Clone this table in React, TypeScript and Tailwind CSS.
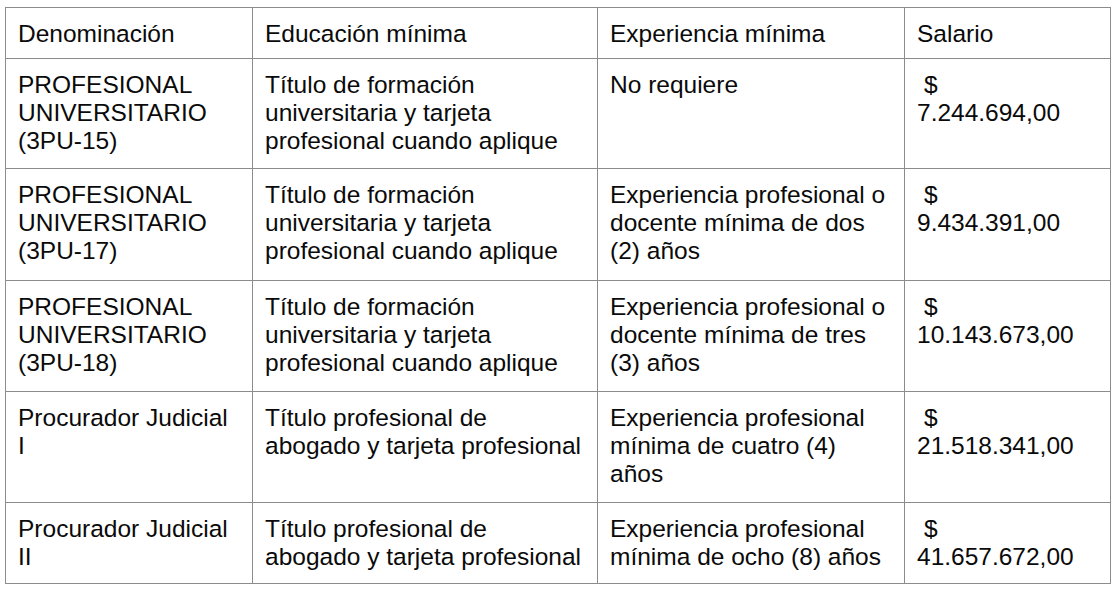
type Row = {
  h: string;
  name: string[];
  edu: string[];
  exp: string[];
  salary: string;
};

const eduUni = ["Título de formación", "universitaria y tarjeta", "profesional cuando aplique"];
const eduAbogado = ["Título profesional de", "abogado y tarjeta profesional"];

const rows: Row[] = [
  {
    h: "h-[110px]",
    name: ["PROFESIONAL", "UNIVERSITARIO", "(3PU-15)"],
    edu: eduUni,
    exp: ["No requiere"],
    salary: "7.244.694,00",
  },
  {
    h: "h-[112px]",
    name: ["PROFESIONAL", "UNIVERSITARIO", "(3PU-17)"],
    edu: eduUni,
    exp: ["Experiencia profesional o", "docente mínima de dos", "(2) años"],
    salary: "9.434.391,00",
  },
  {
    h: "h-[111px]",
    name: ["PROFESIONAL", "UNIVERSITARIO", "(3PU-18)"],
    edu: eduUni,
    exp: ["Experiencia profesional o", "docente mínima de tres", "(3) años"],
    salary: "10.143.673,00",
  },
  {
    h: "h-[111px]",
    name: ["Procurador Judicial", "I"],
    edu: eduAbogado,
    exp: ["Experiencia profesional", "mínima de cuatro (4)", "años"],
    salary: "21.518.341,00",
  },
  {
    h: "h-[81px]",
    name: ["Procurador Judicial", "II"],
    edu: eduAbogado,
    exp: ["Experiencia profesional", "mínima de ocho (8) años"],
    salary: "41.657.672,00",
  },
];

const cell =
  "border border-[#8c8c8c] px-[12px] pt-[12px] align-top text-left font-normal whitespace-nowrap overflow-hidden";

const Lines = ({ lines }: { lines: string[] }) => (
  <>
    {lines.map((line, i) => (
      <div key={i}>{line}</div>
    ))}
  </>
);

const App = () => {
  return (
    <div className="w-[1116px] h-[592px] bg-white pl-[5px] pt-[7px] font-['Liberation_Sans',Arial,sans-serif] text-[24.5px] leading-[28px] text-[#0a0a0a]">
      <table className="table-fixed border-collapse w-[1105px]">
        <colgroup>
          <col className="w-[247px]" />
          <col className="w-[345px]" />
          <col className="w-[307px]" />
          <col className="w-[206px]" />
        </colgroup>
        <thead>
          <tr className="h-[51px]">
            <th className={cell}>Denominación</th>
            <th className={cell}>Educación mínima</th>
            <th className={cell}>Experiencia mínima</th>
            <th className={cell}>Salario</th>
          </tr>
        </thead>
        <tbody>
          {rows.map((row, i) => (
            <tr key={i} className={row.h}>
              <td className={cell}>
                <Lines lines={row.name} />
              </td>
              <td className={cell}>
                <Lines lines={row.edu} />
              </td>
              <td className={cell}>
                <Lines lines={row.exp} />
              </td>
              <td className={cell}>
                <div className="pl-[7px]">$</div>
                <div>{row.salary}</div>
              </td>
            </tr>
          ))}
        </tbody>
      </table>
    </div>
  );
};

export default App;
